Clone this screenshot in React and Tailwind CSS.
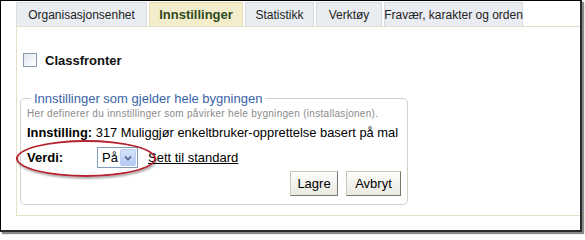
const tabs = [
  { label: 'Organisasjonsenhet', w: 'w-[131px]' },
  { label: 'Innstillinger', w: 'w-[94px]', active: true },
  { label: 'Statistikk', w: 'w-[69px]' },
  { label: 'Verktøy', w: 'w-[66px]' },
  { label: 'Fravær, karakter og orden', w: 'w-[139px]' },
]

function Tab({ tab }) {
  if (tab.active) {
    return (
      <div className={`${tab.w} h-[24px] flex items-center justify-center whitespace-nowrap bg-[#f4edcc] border border-b-0 border-[#e4dbb0] font-bold text-[13px] text-[#2f4a1e]`}>
        {tab.label}
      </div>
    )
  }
  return (
    <div className={`${tab.w} h-[24px] flex items-center justify-center whitespace-nowrap bg-[#e9edf2] border border-b-0 border-[#d7dce3] text-[12px] text-[#222]`}>
      {tab.label}
    </div>
  )
}

function Select() {
  return (
    <div className="w-[41px] h-[21px] border border-[#7f9db9] bg-white flex items-center justify-between pl-[4px] pr-[1px]">
      <span className="text-[13px] text-black">På</span>
      <span className="w-[16px] h-[17px] rounded-[2px] bg-gradient-to-b from-[#d7e3fd] to-[#b4c9f5] border border-[#b8cbf3] flex items-center justify-center">
        <svg width="8" height="6" viewBox="0 0 8 6">
          <path d="M1 1.5 L4 4.5 L7 1.5" fill="none" stroke="#4d6185" strokeWidth="1.6" />
        </svg>
      </span>
    </div>
  )
}

function Button({ children, w }) {
  return (
    <button className={`${w} h-[25px] bg-gradient-to-b from-[#fdfdfb] to-[#e9e8e1] border border-[#c9c7bb] border-r-[#7a786e] border-b-[#7a786e] text-[13px] text-black flex items-center justify-center`}>
      {children}
    </button>
  )
}

export default function App() {
  return (
    <div className="relative w-[585px] h-[236px] bg-white font-['Liberation_Sans',Arial,sans-serif] text-[13px] leading-none overflow-hidden">
      <div className="w-[582px] h-[232px] bg-white border-l border-t border-black border-r-2 border-b-2 border-r-[#2a2a2a] border-b-[#2a2a2a] shadow-[2px_2px_1px_#8a8a8a] pl-[15px] pt-[1px]">
        <div className="flex gap-[2px]">
          {tabs.map((t) => (
            <Tab key={t.label} tab={t} />
          ))}
        </div>
        <div className="h-[190px] border-l border-t border-b border-[#e5e1c6] pl-[3px]">
          <div className="flex items-center mt-[26px] ml-[3px] h-[14px]">
            <span className="w-[14px] h-[14px] border border-[#8c9bb0] bg-gradient-to-br from-[#dfe6ef] to-white" />
            <span className="ml-[8px] font-bold text-[13px] text-[#111]">Classfronter</span>
          </div>
          <fieldset className="w-[388px] mt-[24px] border border-[#d3d1c6] rounded-[5px] px-[6px] pb-[8px]">
            <legend className="ml-[4px] px-[3px] text-[13px] leading-[15px] text-[#3a63a9]">
              Innstillinger som gjelder hele bygningen
            </legend>
            <p className="mt-[2px] text-[10px] leading-[12px] text-[#8a8a8a] tracking-[0.3px] whitespace-nowrap">
              Her definerer du innstillinger som påvirker hele bygningen (installasjonen).
            </p>
            <p className="mt-[5px] text-[12.9px] leading-[16px] text-black whitespace-nowrap">
              <span className="font-bold">Innstilling:</span> 317 Muliggjør enkeltbruker-opprettelse basert på mal
            </p>
            <div className="flex items-center mt-[6px]">
              <span className="w-[70px] font-bold text-black">Verdi:</span>
              <Select />
              <span className="ml-[10px] underline text-black">Sett til standard</span>
            </div>
            <div className="flex justify-end gap-[8px] mt-[3px]">
              <Button w="w-[48px]">Lagre</Button>
              <Button w="w-[55px]">Avbryt</Button>
            </div>
          </fieldset>
        </div>
      </div>
      <div className="absolute left-[16px] top-[140px] w-[140px] h-[37px] rounded-[50%] border-2 border-[#b3222e] shadow-[1px_2px_2px_rgba(0,0,0,0.3)]" />
    </div>
  )
}
